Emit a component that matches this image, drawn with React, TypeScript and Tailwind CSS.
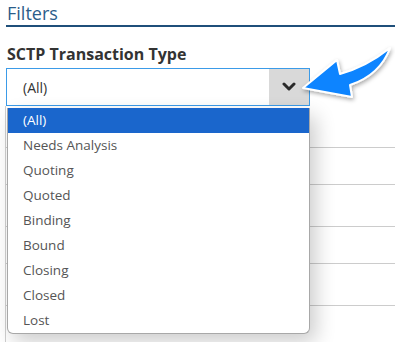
import React from "react";

const items = ["(All)", "Needs Analysis", "Quoting", "Quoted", "Binding", "Bound", "Closing", "Closed", "Lost"];

export default function App() {
  return (
    <div className="relative w-[395px] h-[342px] overflow-hidden bg-white" style={{ fontFamily: '"Open Sans", sans-serif' }}>
      <div className="ml-[6px] border-b-2 border-[#1f4f7a] pl-[1px] pt-[1px] h-[27px] text-[18px] leading-[24px] text-[#2b5d8a]">
        Filters
      </div>
      <div className="ml-[7px] mt-[16px] text-[16px] leading-[22px] font-bold text-[#333]">SCTP Transaction Type</div>
      <div className="relative ml-[6px] mt-[3px] w-[304px]">
        <div className="flex h-[38px] border border-[#3b9be8] bg-white">
          <div className="flex-1 flex items-center pl-[16px] text-[14px] text-[#333]">(All)</div>
          <div className="w-[40px] flex items-center justify-center bg-[#d9d9d9]">
            <svg width="14" height="10" viewBox="0 0 14 10">
              <path d="M2 2 L7 7 L12 2" fill="none" stroke="#2a2a2a" strokeWidth="3" strokeLinecap="round" strokeLinejoin="round" />
            </svg>
          </div>
        </div>
        <div className="absolute left-[1px] top-[40px] z-10 w-[303px] overflow-hidden rounded-b-[6px] border border-t-0 border-[#a8a8a8] bg-white shadow-[6px_8px_20px_rgba(0,0,0,0.2)]">
          {items.map((it, i) => (
            <div
              key={it}
              className={
                i === 0
                  ? "h-[25px] pl-[15px] flex items-center text-[13.5px] bg-[#1a66cc] text-white"
                  : "h-[25px] pl-[15px] flex items-center text-[13.5px] text-[#555]"
              }
            >
              {it}
            </div>
          ))}
        </div>
      </div>
      <div className="ml-[5px] border-l border-[#cfcfcf] h-[240px] flex flex-col">
        <div className="h-[42px] border-b border-[#cccccc]" />
        <div className="h-[37px] border-b border-[#cccccc]" />
        <div className="h-[42px] border-b border-[#cccccc]" />
        <div className="h-[37px] border-b border-[#cccccc]" />
        <div className="h-[42px] border-b border-[#cccccc]" />
      </div>
      <svg className="absolute left-0 top-0 z-20" width="395" height="342" viewBox="0 0 395 342">
        <defs>
          <filter id="sh" x="-20%" y="-20%" width="140%" height="140%">
            <feDropShadow dx="1" dy="2" stdDeviation="2" floodColor="#000" floodOpacity="0.35" />
          </filter>
        </defs>
        <path
          d="M303 88 L337 60 L340 74 Q366 67 390 48 Q380 75 350 85 L352 97 Z"
          fill="#0a84ff"
          stroke="#ffffff"
          strokeWidth="2"
          strokeLinejoin="round"
          filter="url(#sh)"
        />
      </svg>
    </div>
  );
}
